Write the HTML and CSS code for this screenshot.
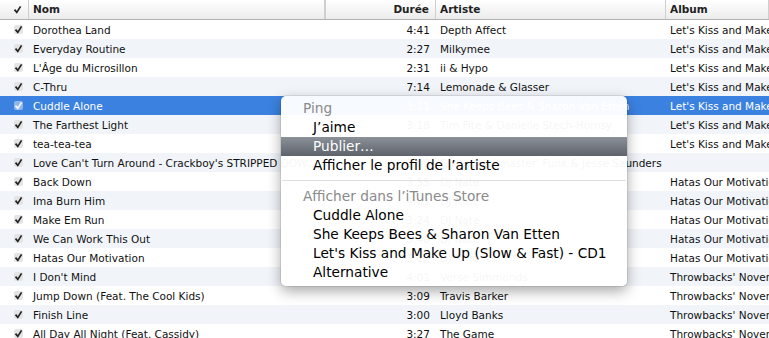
FILE: index.html
```html
<!DOCTYPE html>
<html lang="fr">
<head>
  <meta charset="UTF-8">
  <title>iTunes – Ping</title>
  <link rel="stylesheet" href="styles.css">
</head>
<body>
  <div class="tracks">
    <div class="row head">
      <span class="chk"><svg viewBox="0 0 9 9"><path d="M1.5 4.6 L3.8 7.4 L7.6 1.4"/></svg></span>
      <span class="col name">Nom</span>
      <span class="col time">Durée</span>
      <span class="col artist">Artiste</span>
      <span class="col album">Album</span>
    </div>
    <div id="rows"></div>
  </div>

  <div class="menu">
    <div class="menu-label">Ping</div>
    <div class="menu-item">J’aime</div>
    <div class="menu-item active">Publier…</div>
    <div class="menu-item">Afficher le profil de l’artiste</div>
    <div class="menu-sep"></div>
    <div class="menu-label">Afficher dans l’iTunes Store</div>
    <div class="menu-item">Cuddle Alone</div>
    <div class="menu-item">She Keeps Bees &amp; Sharon Van Etten</div>
    <div class="menu-item">Let's Kiss and Make Up (Slow &amp; Fast) - CD1</div>
    <div class="menu-item">Alternative</div>
  </div>

  <script>
    const kiss = "Let's Kiss and Make Up (Slow & Fast) - CD1";
    const hatas = "Hatas Our Motivation";
    const throwbacks = "Throwbacks' November";
    const tracks = [
      ["Dorothea Land", "4:41", "Depth Affect", kiss],
      ["Everyday Routine", "2:27", "Milkymee", kiss],
      ["L'Âge du Microsillon", "2:31", "ii & Hypo", kiss],
      ["C-Thru", "7:14", "Lemonade & Glasser", kiss],
      ["Cuddle Alone", "3:11", "She Keeps Bees & Sharon Van Etten", kiss, true],
      ["The Farthest Light", "3:18", "Tim Fite & Danielle Stech-Homsy", kiss],
      ["tea-tea-tea", "2:46", "Small Black", kiss],
      ["Love Can't Turn Around - Crackboy's STRIPPED DOWN Mix", "5:02", "Farley 'Jackmaster' Funk & Jesse Saunders", ""],
      ["Back Down", "3:55", "DJ Nate", hatas],
      ["Ima Burn Him", "4:01", "DJ Nate", hatas],
      ["Make Em Run", "3:24", "DJ Nate", hatas],
      ["We Can Work This Out", "3:40", "DJ Nate", hatas],
      ["Hatas Our Motivation", "3:12", "DJ Nate", hatas],
      ["I Don't Mind", "4:01", "Verse Simmonds", throwbacks],
      ["Jump Down (Feat. The Cool Kids)", "3:09", "Travis Barker", throwbacks],
      ["Finish Line", "3:00", "Lloyd Banks", throwbacks],
      ["All Day All Night (Feat. Cassidy)", "3:27", "The Game", throwbacks]
    ];
    const check = '<svg viewBox="0 0 9 9"><path d="M1.5 4.6 L3.8 7.4 L7.6 1.4"/></svg>';
    const rowsDiv = document.getElementById('rows');
    tracks.forEach((t, i) => {
      const div = document.createElement('div');
      div.className = 'row' + (i % 2 ? ' alt' : '') + (t[4] ? ' selected' : '');
      div.innerHTML = `<span class="chk box">${check}</span>
        <span class="col name">${t[0]}</span>
        <span class="col time">${t[1]}</span>
        <span class="col artist">${t[2]}</span>
        <span class="col album">${t[3]}</span>`;
      rowsDiv.appendChild(div);
    });
  </script>
</body>
</html>
```

FILE: styles.css
```css
:root {
  --alt: #f1f5fa;
  --select: #3b82e0;
  --text: #111;
}

body {
  margin: 0;
  font-family: "DejaVu Sans", "Noto Sans", sans-serif;
  font-size: 10.5px;
  color: var(--text);
  background: #fff;
  overflow: hidden;
}

.tracks {
  width: 769px;
}

.row {
  display: grid;
  grid-template-columns: 29px 296px 111px 230px 1fr;
  height: 19px;
  align-items: center;
  white-space: nowrap;
}

.row.alt {
  background-color: var(--alt);
}

.row.selected {
  background-color: var(--select);
  color: #fff;
}

.row.head {
  height: 19px;
  background: linear-gradient(#ffffff, #ececec);
  border-bottom: 1px solid #b3b3b3;
  font-weight: bold;
  color: #222;
}

.head .col,
.head .chk {
  height: 19px;
  line-height: 19px;
  border-right: 1px solid #cfcfcf;
}

.head .time {
  border-left: 1px solid #cfcfcf;
}

.col {
  overflow: hidden;
  text-overflow: ellipsis;
  padding-left: 4px;
}

.col.time {
  text-align: right;
  padding-right: 6px;
  padding-left: 0;
}

.col.album {
  text-overflow: clip;
}

.chk {
  display: flex;
  justify-content: flex-end;
  align-items: center;
  padding-right: 6px;
}

.chk svg {
  width: 9px;
  height: 9px;
  fill: none;
  stroke: #222;
  stroke-width: 1.7;
}

.chk.box svg {
  background-color: #e4e4e4;
  border-radius: 2px;
}

.selected .chk.box svg {
  background-color: #8fb6ec;
  stroke: #f4f8ff;
}

/* context menu */
.menu {
  position: absolute;
  left: 281px;
  top: 96px;
  width: 346px;
  padding: 3px 0 4px;
  background-color: rgba(255, 255, 255, 0.96);
  border-radius: 5px;
  box-shadow: 0 5px 14px rgba(0, 0, 0, 0.35), 0 0 0 1px rgba(0, 0, 0, 0.08);
  font-size: 13.7px;
  color: #000;
}

.menu-label,
.menu-item {
  height: 19px;
  line-height: 19px;
  white-space: nowrap;
}

.menu-label {
  padding-left: 22px;
  color: #8a8a8a;
}

.menu-item {
  padding-left: 32px;
}

.menu-item.active {
  background: linear-gradient(#8b9099, #5d626b);
  color: #fff;
}

.menu-sep {
  height: 1px;
  margin: 5px 1px 6px;
  background-color: #dedede;
}
```
